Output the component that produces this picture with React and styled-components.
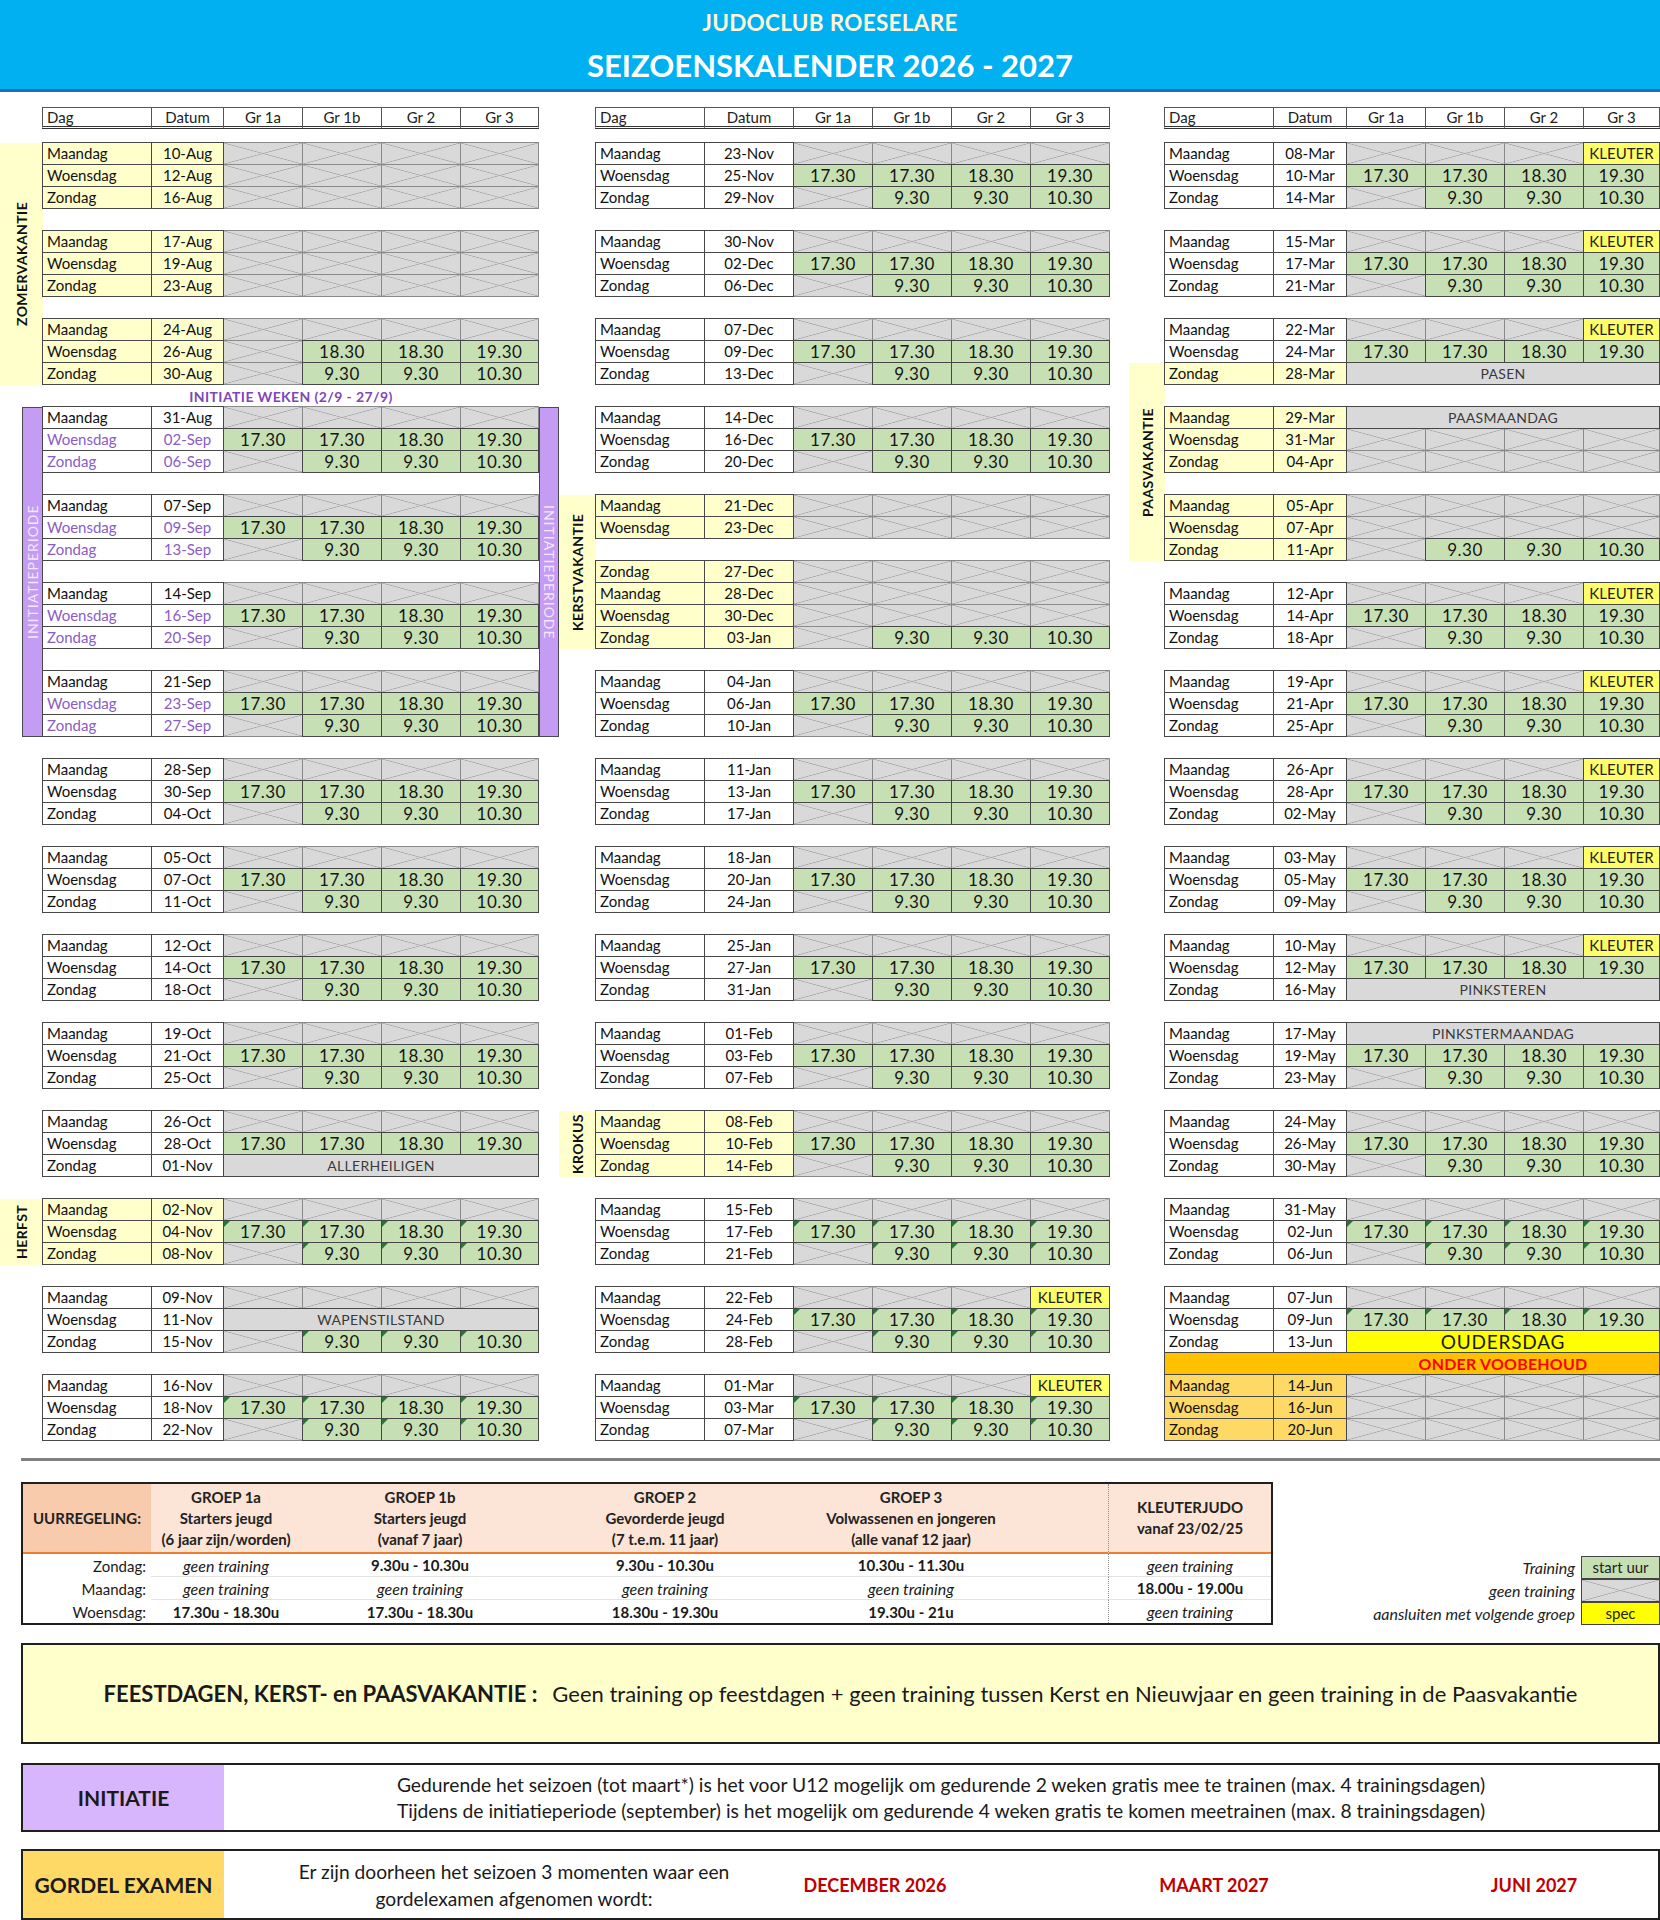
import React from 'react';
import styled, { createGlobalStyle, css } from 'styled-components';

const GlobalStyle = createGlobalStyle`
  html, body { margin: 0; padding: 0; background: #fff; }
  body { font-family: Lato, 'Open Sans', 'Liberation Sans', sans-serif; color: #111; }
  * { box-sizing: border-box; }
`;

const Page = styled.div`
  width: 1660px;
`;

const Banner = styled.header`
  height: 92px;
  background: #00b0f0;
  border-bottom: 3px solid #1f6db5;
  display: flex;
  flex-direction: column;
  align-items: center;
  padding-top: 9px;
  gap: 8px;
`;

const ClubName = styled.div`
  font-size: 22.5px;
  font-weight: 700;
  line-height: 28px;
  color: #fff6d5;
  letter-spacing: 0.3px;
`;

const SeasonTitle = styled.h1`
  margin: 0;
  font-size: 31px;
  font-weight: 700;
  line-height: 40px;
  color: #fff;
`;

const Calendar = styled.div`
  display: flex;
  margin-top: 15px;
`;

const Sheet = styled.div`
  display: grid;
  grid-template-columns: ${p => p.$cols};
  grid-template-rows: 22px 14px repeat(59, 22px);
`;

const TONE = {
  plain: { bg: '#fff', fg: '#111' },
  holiday: { bg: '#ffffcc', fg: '#111' },
  intro: { bg: '#fff', fg: '#8a5cc6' },
  tentative: { bg: '#ffd966', fg: '#111' },
};

const cellBase = css`
  grid-row: ${p => p.$row};
  grid-column: ${p => p.$col} / span ${p => p.$span || 1};
  position: relative;
  margin: -1px 0 0 -1px;
  border: 1px solid #474747;
  display: flex;
  align-items: center;
  white-space: nowrap;
  overflow: hidden;
  line-height: 1;
`;

const HeadCell = styled.div`
  grid-row: 1;
  grid-column: ${p => p.$col};
  margin-left: -1px;
  border: 1px solid #555;
  border-bottom: 3px double #333;
  display: flex;
  align-items: center;
  justify-content: ${p => (p.$left ? 'flex-start' : 'center')};
  padding-left: ${p => (p.$left ? '4px' : '0')};
  font-size: 15px;
  color: #222;
`;

const DayCell = styled.div`
  ${cellBase};
  z-index: 1;
  padding-left: 4px;
  font-size: 15px;
  background: ${p => TONE[p.$tone].bg};
  color: ${p => TONE[p.$tone].fg};
`;

const DateCell = styled.div`
  ${cellBase};
  z-index: 1;
  justify-content: center;
  font-size: 15px;
  background: ${p => TONE[p.$tone].bg};
  color: ${p => TONE[p.$tone].fg};
`;

const crossed = css`
  background:
    linear-gradient(to top right, transparent calc(50% - 0.7px), #a6a6a6 50%, transparent calc(50% + 0.7px)),
    linear-gradient(to bottom right, transparent calc(50% - 0.7px), #a6a6a6 50%, transparent calc(50% + 0.7px)),
    #d9d9d9;
`;

const SlotCell = styled.div`
  ${cellBase};
  justify-content: center;
  ${p => p.$kind === 'off' && css`
    ${crossed};
    border-color: #8a8a8a;
  `}
  ${p => p.$kind === 'time' && css`
    z-index: 1;
    background: #c6e0b4;
    font-size: 17px;
    letter-spacing: 0.5px;
    color: #151515;
  `}
  ${p => p.$kind === 'kleuter' && css`
    z-index: 1;
    background: #ffff66;
    font-size: 15px;
    color: #222;
  `}
  ${p => p.$tri && css`
    &::before {
      content: '';
      position: absolute;
      top: 0;
      left: 0;
      border-style: solid;
      border-width: 6px 6px 0 0;
      border-color: #1e7b30 transparent transparent transparent;
    }
  `}
`;

const MergeCell = styled.div`
  ${cellBase};
  z-index: 1;
  justify-content: center;
  background: ${p => (p.$event ? '#ffff00' : '#d9d9d9')};
  font-size: ${p => (p.$event ? '19px' : '14px')};
  color: ${p => (p.$event ? '#1a1a1a' : '#3a3a3a')};
  letter-spacing: ${p => (p.$event ? '0.8px' : '0.3px')};
`;

const Ribbon = styled.div`
  ${cellBase};
  z-index: 1;
  justify-content: center;
  padding-left: 182px;
  background: #ffc000;
  color: #ff0000;
  font-weight: 700;
  font-size: 16px;
  letter-spacing: 0.2px;
`;

const Note = styled.div`
  grid-row: ${p => p.$row};
  grid-column: ${p => p.$col} / span 6;
  display: flex;
  align-items: center;
  justify-content: center;
  font-size: 14px;
  font-weight: 700;
  color: #7f45bb;
  letter-spacing: 0.4px;
`;

const Band = styled.div`
  grid-column: ${p => p.$col};
  grid-row: ${p => p.$rows};
  display: flex;
  align-items: center;
  justify-content: center;
  writing-mode: vertical-rl;
  white-space: nowrap;
  ${p => (p.$down ? '' : 'transform: rotate(180deg);')}
  ${p => (p.$intro
    ? css`
      background: #c59cf4;
      border: 1px solid #4a4a4a;
      color: rgba(255, 255, 255, 0.78);
      font-size: 14px;
      letter-spacing: 1px;
    `
    : css`
      background: #ffffcc;
      color: #111;
      font-size: 14px;
      font-weight: 700;
      letter-spacing: 0.4px;
    `)}
`;

/* ---------- data ---------- */

const DAYS = ['Maandag', 'Woensdag', 'Zondag'];
const HEAD = ['Dag', 'Datum', 'Gr 1a', 'Gr 1b', 'Gr 2', 'Gr 3'];
const OFF = ['x', 'x', 'x', 'x'];
const WED = ['17.30', '17.30', '18.30', '19.30'];
const SUN = ['x', '9.30', '9.30', '10.30'];
const KLEUTER_MON = ['x', 'x', 'x', 'K'];

const at = (b, r) => 3 + b * 4 + r;

const week = (dates, o = {}) => ({
  dates,
  tones: o.tones || [o.tone || 'plain', o.tone || 'plain', o.tone || 'plain'],
  slots: [o.mon || (o.kleuter ? KLEUTER_MON : OFF), o.wed || WED, o.sun || SUN],
  tri: o.tri,
  offsets: o.offsets || [0, 1, 2],
});

const INTRO = ['plain', 'intro', 'intro'];

const leftWeeks = [
  week(['10-Aug', '12-Aug', '16-Aug'], { tone: 'holiday', wed: OFF, sun: OFF }),
  week(['17-Aug', '19-Aug', '23-Aug'], { tone: 'holiday', wed: OFF, sun: OFF }),
  week(['24-Aug', '26-Aug', '30-Aug'], { tone: 'holiday', wed: ['x', '18.30', '18.30', '19.30'] }),
  week(['31-Aug', '02-Sep', '06-Sep'], { tones: INTRO }),
  week(['07-Sep', '09-Sep', '13-Sep'], { tones: INTRO }),
  week(['14-Sep', '16-Sep', '20-Sep'], { tones: INTRO }),
  week(['21-Sep', '23-Sep', '27-Sep'], { tones: INTRO }),
  week(['28-Sep', '30-Sep', '04-Oct']),
  week(['05-Oct', '07-Oct', '11-Oct']),
  week(['12-Oct', '14-Oct', '18-Oct']),
  week(['19-Oct', '21-Oct', '25-Oct']),
  week(['26-Oct', '28-Oct', '01-Nov'], { sun: { label: 'ALLERHEILIGEN' } }),
  week(['02-Nov', '04-Nov', '08-Nov'], { tone: 'holiday', tri: true }),
  week(['09-Nov', '11-Nov', '15-Nov'], { wed: { label: 'WAPENSTILSTAND' }, tri: true }),
  week(['16-Nov', '18-Nov', '22-Nov'], { tri: true }),
];

const midWeeks = [
  week(['23-Nov', '25-Nov', '29-Nov']),
  week(['30-Nov', '02-Dec', '06-Dec']),
  week(['07-Dec', '09-Dec', '13-Dec']),
  week(['14-Dec', '16-Dec', '20-Dec']),
  week(['21-Dec', '23-Dec', '27-Dec'], { tone: 'holiday', wed: OFF, sun: OFF, offsets: [0, 1, 3] }),
  week(['28-Dec', '30-Dec', '03-Jan'], { tone: 'holiday', wed: OFF }),
  week(['04-Jan', '06-Jan', '10-Jan']),
  week(['11-Jan', '13-Jan', '17-Jan']),
  week(['18-Jan', '20-Jan', '24-Jan']),
  week(['25-Jan', '27-Jan', '31-Jan']),
  week(['01-Feb', '03-Feb', '07-Feb']),
  week(['08-Feb', '10-Feb', '14-Feb'], { tone: 'holiday' }),
  week(['15-Feb', '17-Feb', '21-Feb'], { tri: true }),
  week(['22-Feb', '24-Feb', '28-Feb'], { kleuter: true, tri: true }),
  week(['01-Mar', '03-Mar', '07-Mar'], { kleuter: true, tri: true }),
];

const rightWeeks = [
  week(['08-Mar', '10-Mar', '14-Mar'], { kleuter: true }),
  week(['15-Mar', '17-Mar', '21-Mar'], { kleuter: true }),
  week(['22-Mar', '24-Mar', '28-Mar'], { kleuter: true, tones: ['plain', 'plain', 'holiday'], sun: { label: 'PASEN' } }),
  week(['29-Mar', '31-Mar', '04-Apr'], { tone: 'holiday', mon: { label: 'PAASMAANDAG' }, wed: OFF, sun: OFF }),
  week(['05-Apr', '07-Apr', '11-Apr'], { tone: 'holiday', wed: OFF }),
  week(['12-Apr', '14-Apr', '18-Apr'], { kleuter: true }),
  week(['19-Apr', '21-Apr', '25-Apr'], { kleuter: true }),
  week(['26-Apr', '28-Apr', '02-May'], { kleuter: true }),
  week(['03-May', '05-May', '09-May'], { kleuter: true }),
  week(['10-May', '12-May', '16-May'], { kleuter: true, sun: { label: 'PINKSTEREN' } }),
  week(['17-May', '19-May', '23-May'], { mon: { label: 'PINKSTERMAANDAG' } }),
  week(['24-May', '26-May', '30-May']),
  week(['31-May', '02-Jun', '06-Jun'], { tri: true }),
  week(['07-Jun', '09-Jun', '13-Jun'], { tri: true, sun: { label: 'OUDERSDAG', event: true } }),
  week(['14-Jun', '16-Jun', '20-Jun'], { tone: 'tentative', wed: OFF, sun: OFF }),
];

const slotKind = v => (v === 'x' ? 'off' : v === 'K' ? 'kleuter' : 'time');

function WeekRows({ data, index, dag }) {
  return data.dates.map((date, i) => {
    const row = at(index, data.offsets[i]);
    const tone = data.tones[i];
    const slots = data.slots[i];
    return (
      <React.Fragment key={date}>
        <DayCell $row={row} $col={dag} $tone={tone}>{DAYS[i]}</DayCell>
        <DateCell $row={row} $col={dag + 1} $tone={tone}>{date}</DateCell>
        {Array.isArray(slots) ? (
          slots.map((v, j) => {
            const kind = slotKind(v);
            return (
              <SlotCell key={j} $row={row} $col={dag + 2 + j} $kind={kind} $tri={data.tri && kind === 'time'}>
                {kind === 'time' ? v : kind === 'kleuter' ? 'KLEUTER' : null}
              </SlotCell>
            );
          })
        ) : (
          <MergeCell $row={row} $col={dag + 2} $span={4} $event={slots.event}>{slots.label}</MergeCell>
        )}
      </React.Fragment>
    );
  });
}

function Panel({ cols, dag, weeks, children }) {
  return (
    <Sheet $cols={cols}>
      {HEAD.map((h, i) => (
        <HeadCell key={h} $col={dag + i} $left={i === 0}>{h}</HeadCell>
      ))}
      {weeks.map((w, b) => (
        <WeekRows key={b} data={w} index={b} dag={dag} />
      ))}
      {children}
    </Sheet>
  );
}

/* ---------- legend ---------- */

const Rule = styled.div`
  margin: 17px 0 0 21px;
  width: 1639px;
  height: 3px;
  background: #808080;
`;

const LegendRow = styled.div`
  display: flex;
  align-items: flex-end;
  margin: 21px 0 0 21px;
`;

const Schedule = styled.div`
  width: 1252px;
  border: 2px solid #1f1f1f;
  display: grid;
  grid-template-columns: 128px 150px 238px 252px 240px 77px 163px;
  grid-template-rows: 70px repeat(3, 23px);
`;

const GroupHead = styled.div`
  background: ${p => (p.$label ? '#f8cbad' : '#fce4d6')};
  border-bottom: 2px solid #ed7d31;
  border-left: ${p => (p.$divider ? '1px dotted #8c8c8c' : 'none')};
  display: flex;
  flex-direction: column;
  align-items: center;
  justify-content: center;
  font-size: 15px;
  font-weight: 700;
  line-height: 21px;
  color: #222;
  text-align: center;
  white-space: nowrap;
`;

const Entry = styled.div`
  display: flex;
  align-items: center;
  justify-content: ${p => (p.$label ? 'flex-end' : 'center')};
  padding-right: ${p => (p.$label ? '5px' : '0')};
  font-size: ${p => (p.$none ? '16px' : '15px')};
  font-style: ${p => (p.$none ? 'italic' : 'normal')};
  font-weight: ${p => (p.$none || p.$label ? 400 : 700)};
  color: #1a1a1a;
  white-space: nowrap;
  border-left: ${p => (p.$divider ? '1px dotted #8c8c8c' : 'none')};
  border-bottom: ${p => (p.$line ? '1px solid #e3e3e3' : 'none')};
`;

const KeyList = styled.div`
  margin-left: auto;
  display: flex;
  flex-direction: column;
`;

const KeyRow = styled.div`
  display: flex;
  align-items: center;
  justify-content: flex-end;
  height: 23px;
  gap: 6px;
  font-size: 16px;
  font-style: italic;
  color: #222;
  white-space: nowrap;
`;

const Swatch = styled.div`
  width: 79px;
  height: 23px;
  margin-top: -1px;
  border: 1px solid #444;
  display: flex;
  align-items: center;
  justify-content: center;
  font-size: 15px;
  font-style: normal;
  color: #222;
  ${p => p.$kind === 'time' && 'background: #c6e0b4;'}
  ${p => p.$kind === 'spec' && 'background: #ffff00;'}
  ${p => p.$kind === 'off' && crossed}
`;

const GROUPS = [
  ['GROEP 1a', 'Starters jeugd', '(6 jaar zijn/worden)'],
  ['GROEP 1b', 'Starters jeugd', '(vanaf 7 jaar)'],
  ['GROEP 2', 'Gevorderde jeugd', '(7 t.e.m. 11 jaar)'],
  ['GROEP 3', 'Volwassenen en jongeren', '(alle vanaf 12 jaar)'],
];

const HOURS = [
  ['Zondag:', 'geen training', '9.30u - 10.30u', '9.30u - 10.30u', '10.30u - 11.30u', 'geen training'],
  ['Maandag:', 'geen training', 'geen training', 'geen training', 'geen training', '18.00u - 19.00u'],
  ['Woensdag:', '17.30u - 18.30u', '17.30u - 18.30u', '18.30u - 19.30u', '19.30u - 21u', 'geen training'],
];

const KEYS = [
  ['Training', 'time', 'start uur'],
  ['geen training', 'off', ''],
  ['aansluiten met volgende groep', 'spec', 'spec'],
];

/* ---------- notices ---------- */

const Notice = styled.div`
  margin: 18px 0 0 21px;
  width: 1639px;
  height: 101px;
  background: #ffffcc;
  border: 2px solid #1f1f1f;
  display: flex;
  align-items: center;
  justify-content: center;
  font-size: 22px;
  color: #1a1a1a;
  white-space: nowrap;
  strong {
    font-weight: 700;
    margin-right: 15px;
  }
`;

const InfoBox = styled.div`
  margin: ${p => p.$gap}px 0 0 21px;
  width: 1639px;
  height: ${p => p.$h}px;
  border: 2px solid #1f1f1f;
  display: grid;
  grid-template-columns: 201px 1fr;
`;

const InfoLabel = styled.div`
  background: ${p => p.$bg};
  display: flex;
  align-items: center;
  justify-content: center;
  font-size: 21px;
  font-weight: 700;
  color: #1a1a1a;
`;

const InfoText = styled.div`
  display: flex;
  flex-direction: column;
  align-items: center;
  justify-content: center;
  font-size: 19.3px;
  line-height: 26px;
  color: #1a1a1a;
  white-space: nowrap;
`;

const ExamRow = styled.div`
  display: grid;
  grid-template-columns: 580px 142px 536px 104px 1fr;
  align-items: center;
  justify-items: center;
`;

const ExamText = styled.div`
  text-align: center;
  font-size: 19.2px;
  line-height: 27px;
  color: #1a1a1a;
  white-space: nowrap;
`;

const ExamDate = styled.div`
  font-size: 18px;
  font-weight: 700;
  color: #c00000;
  white-space: nowrap;
`;

export default function App() {
  return (
    <Page>
      <GlobalStyle />
      <Banner>
        <ClubName>JUDOCLUB ROESELARE</ClubName>
        <SeasonTitle>SEIZOENSKALENDER 2026 - 2027</SeasonTitle>
      </Banner>

      <Calendar>
        <Panel cols="22px 21px 109px 72px 79px 79px 79px 78px 20px" dag={3} weeks={leftWeeks}>
          <Band $col="1 / 3" $rows={`${at(0, 0)} / ${at(2, 3)}`}>ZOMERVAKANTIE</Band>
          <Note $row={at(2, 3)} $col={3}>INITIATIE WEKEN (2/9 - 27/9)</Note>
          <Band $intro $col="2" $rows={`${at(3, 0)} / ${at(6, 3)}`}>INITIATIEPERIODE</Band>
          <Band $intro $down $col="9" $rows={`${at(3, 0)} / ${at(6, 3)}`}>INITIATIEPERIODE</Band>
          <Band $col="1 / 3" $rows={`${at(12, 0)} / ${at(12, 3)}`}>HERFST</Band>
        </Panel>
        <Panel cols="37px 109px 89px 79px 79px 79px 79px" dag={2} weeks={midWeeks}>
          <Band $col="1" $rows={`${at(4, 0)} / ${at(5, 3)}`}>KERSTVAKANTIE</Band>
          <Band $col="1" $rows={`${at(11, 0)} / ${at(11, 3)}`}>KROKUS</Band>
        </Panel>
        <Panel cols="19px 36px 109px 73px 79px 79px 79px 76px" dag={3} weeks={rightWeeks}>
          <Band $col="2" $rows={`${at(2, 2)} / ${at(4, 3)}`}>PAASVAKANTIE</Band>
          <Ribbon $row={at(13, 3)} $col={3} $span={6}>ONDER VOOBEHOUD</Ribbon>
        </Panel>
      </Calendar>

      <Rule />

      <LegendRow>
        <Schedule>
          <GroupHead $label>UURREGELING:</GroupHead>
          {GROUPS.map(g => (
            <GroupHead key={g[0]}>
              {g.map(line => <span key={line}>{line}</span>)}
            </GroupHead>
          ))}
          <GroupHead />
          <GroupHead $divider>
            <span>KLEUTERJUDO</span>
            <span>vanaf 23/02/25</span>
          </GroupHead>
          {HOURS.map((row, r) => (
            <React.Fragment key={row[0]}>
              {row.map((text, c) => {
                const cells = [
                  <Entry
                    key={c}
                    $label={c === 0}
                    $none={text.startsWith('geen')}
                    $line={r < 2 && c > 0}
                    $divider={c === 5}
                  >
                    {text}
                  </Entry>,
                ];
                if (c === 4) cells.push(<Entry key="gap" $line={r < 2} />);
                return cells;
              })}
            </React.Fragment>
          ))}
        </Schedule>
        <KeyList>
          {KEYS.map(([label, kind, text]) => (
            <KeyRow key={label}>
              {label}
              <Swatch $kind={kind}>{text}</Swatch>
            </KeyRow>
          ))}
        </KeyList>
      </LegendRow>

      <Notice>
        <strong>FEESTDAGEN, KERST- en PAASVAKANTIE :</strong>
        Geen training op feestdagen + geen training tussen Kerst en Nieuwjaar en geen training in de Paasvakantie
      </Notice>

      <InfoBox $gap={19} $h={69}>
        <InfoLabel $bg="#d8b6fd">INITIATIE</InfoLabel>
        <InfoText>
          <span>Gedurende het seizoen (tot maart*) is het voor U12 mogelijk om gedurende 2 weken gratis mee te trainen (max. 4 trainingsdagen)</span>
          <span>Tijdens de initiatieperiode (september) is het mogelijk om gedurende 4 weken gratis te komen meetrainen (max. 8 trainingsdagen)</span>
        </InfoText>
      </InfoBox>

      <InfoBox $gap={17} $h={71}>
        <InfoLabel $bg="#ffd966">GORDEL EXAMEN</InfoLabel>
        <ExamRow>
          <ExamText>
            Er zijn doorheen het seizoen 3 momenten waar een
            <br />
            gordelexamen afgenomen wordt:
          </ExamText>
          <ExamDate>DECEMBER 2026</ExamDate>
          <ExamDate>MAART 2027</ExamDate>
          <ExamDate>JUNI 2027</ExamDate>
        </ExamRow>
      </InfoBox>
    </Page>
  );
}
